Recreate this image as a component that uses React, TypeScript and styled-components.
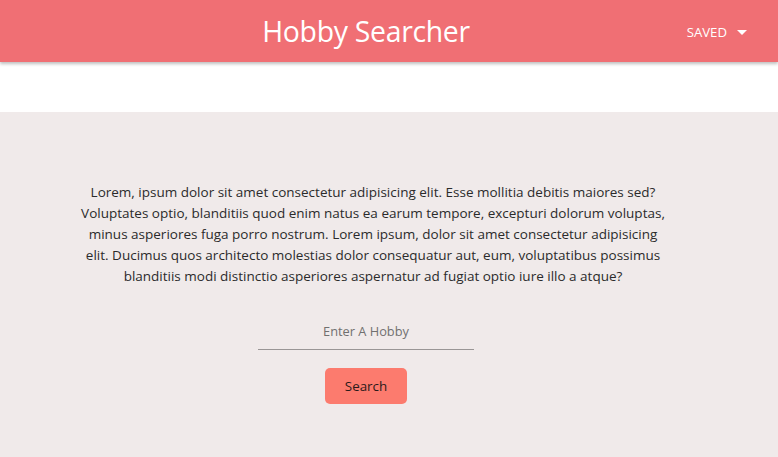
import React from "react";
import styled, { createGlobalStyle } from "styled-components";

const GlobalStyle = createGlobalStyle`
  html, body {
    margin: 0;
    padding: 0;
    background: #f0eaea;
    font-family: "Open Sans", "Noto Sans", sans-serif;
  }
`;

const Header = styled.header`
  height: 62px;
  background: #f06f74;
  box-shadow: 0 2px 3px rgba(0, 0, 0, 0.25);
  display: flex;
  align-items: center;
  justify-content: center;
  position: relative;
  z-index: 1;
  padding-right: 46px;
`;

const Title = styled.h1`
  margin: 0;
  color: #ffffff;
  font-weight: 400;
  font-size: 28.4px;
  letter-spacing: -0.3px;
`;

const SavedMenu = styled.button`
  position: absolute;
  right: 31px;
  top: 23px;
  display: flex;
  align-items: center;
  gap: 10px;
  background: none;
  border: none;
  padding: 0;
  color: #ffffff;
  font-family: inherit;
  font-size: 13.2px;
  cursor: pointer;
`;

const Caret = styled.span`
  width: 0;
  height: 0;
  border-left: 5px solid transparent;
  border-right: 5px solid transparent;
  border-top: 5px solid #ffffff;
`;

const Spacer = styled.div`
  height: 50px;
  background: #ffffff;
`;

const Main = styled.main`
  display: flex;
  flex-direction: column;
  align-items: center;
  padding: 70px 46px 40px 0;
`;

const Intro = styled.p`
  margin: 0 0 0 14px;
  width: 590px;
  text-align: center;
  color: #2b2b2b;
  font-size: 13.5px;
  line-height: 21px;
`;

const SearchForm = styled.form`
  display: flex;
  flex-direction: column;
  align-items: center;
  margin-top: 25px;
`;

const HobbyInput = styled.input`
  width: 216px;
  height: 38px;
  border: none;
  border-bottom: 1px solid #9a9696;
  background: transparent;
  text-align: center;
  font-family: inherit;
  font-size: 12.8px;
  color: #333;
  outline: none;
  box-sizing: border-box;
  &::placeholder {
    color: #707070;
  }
`;

const SearchButton = styled.button`
  margin-top: 18px;
  width: 82px;
  height: 36px;
  border: none;
  border-radius: 5px;
  background: #fc7b6e;
  color: #2a1a1a;
  font-family: inherit;
  font-size: 13.4px;
  cursor: pointer;
`;

export default function App() {
  return (
    <>
      <GlobalStyle />
      <Header>
        <Title>Hobby Searcher</Title>
        <SavedMenu type="button">
          SAVED <Caret />
        </SavedMenu>
      </Header>
      <Spacer />
      <Main>
        <Intro>
          Lorem, ipsum dolor sit amet consectetur adipisicing elit. Esse mollitia debitis maiores sed?
          Voluptates optio, blanditiis quod enim natus ea earum tempore, excepturi dolorum voluptas,
          minus asperiores fuga porro nostrum. Lorem ipsum, dolor sit amet consectetur adipisicing
          elit. Ducimus quos architecto molestias dolor consequatur aut, eum, voluptatibus possimus
          blanditiis modi distinctio asperiores aspernatur ad fugiat optio iure illo a atque?
        </Intro>
        <SearchForm onSubmit={(e) => e.preventDefault()}>
          <HobbyInput placeholder="Enter A Hobby" />
          <SearchButton type="submit">Search</SearchButton>
        </SearchForm>
      </Main>
    </>
  );
}
